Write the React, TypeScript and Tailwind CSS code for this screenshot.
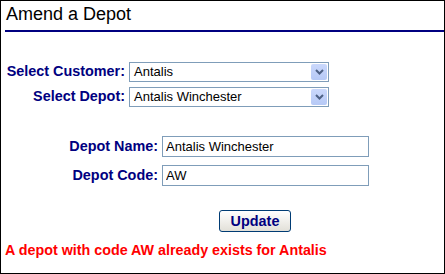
import React from 'react';

function Chevron() {
  return (
    <svg width="9" height="6" viewBox="0 0 9 6" fill="none">
      <path d="M1 1l3.5 3.5L8 1" stroke="#4d6185" strokeWidth="2" />
    </svg>
  );
}

function SelectBox({ value }: { value: string }) {
  return (
    <div className="ml-[4px] flex h-[20px] w-[200px] items-center border border-[#7f9db9] bg-white pl-[4px] pr-[1px]">
      <span className="flex-1 text-[13px] leading-[16px] text-black">{value}</span>
      <div className="flex h-[16px] w-[16px] items-center justify-center rounded-[2px] bg-gradient-to-b from-[#cad8fc] to-[#b6c9f6]">
        <Chevron />
      </div>
    </div>
  );
}

function TextField({ value }: { value: string }) {
  return (
    <input
      type="text"
      readOnly
      value={value}
      className="ml-[4px] h-[21px] w-[207px] border border-[#7f9db9] bg-white px-[3px] text-[13px] text-black outline-none"
    />
  );
}

export default function App() {
  return (
    <div className="h-[274px] w-[445px] border border-black bg-white font-['Liberation_Sans',Arial,sans-serif]">
      {/* Title */}
      <h1 className="pl-[5px] pt-[2px] text-[18px] leading-[22px] font-normal text-black">Amend a Depot</h1>
      <div className="ml-[4px] mt-[5px] h-[2px] bg-[#000080]" />

      {/* Customer / depot pickers */}
      <div className="mt-[30px] flex h-[20px] items-center">
        <label className="w-[124px] text-right text-[14.4px] font-bold text-[#000080]">Select Customer:</label>
        <SelectBox value="Antalis" />
      </div>
      <div className="mt-[5px] flex h-[20px] items-center">
        <label className="w-[124px] text-right text-[14.4px] font-bold text-[#000080]">Select Depot:</label>
        <SelectBox value="Antalis Winchester" />
      </div>

      {/* Depot details */}
      <div className="mt-[29px] flex h-[21px] items-center">
        <label className="w-[157px] text-right text-[14.4px] font-bold text-[#000080]">Depot Name:</label>
        <TextField value="Antalis Winchester" />
      </div>
      <div className="mt-[8px] flex h-[21px] items-center">
        <label className="w-[157px] text-right text-[14.4px] font-bold text-[#000080]">Depot Code:</label>
        <TextField value="AW" />
      </div>

      <div className="mt-[23px] pl-[218px]">
        <button className="h-[22px] w-[72px] rounded-[3px] border border-[#003c74] bg-gradient-to-b from-white to-[#e2e0d8] text-[14.4px] font-bold leading-[18px] text-[#000080]">
          Update
        </button>
      </div>

      <p className="mt-[9px] pl-[4px] text-[14.3px] font-bold leading-[16px] text-[#ff0000]">
        A depot with code AW already exists for Antalis
      </p>
    </div>
  );
}
